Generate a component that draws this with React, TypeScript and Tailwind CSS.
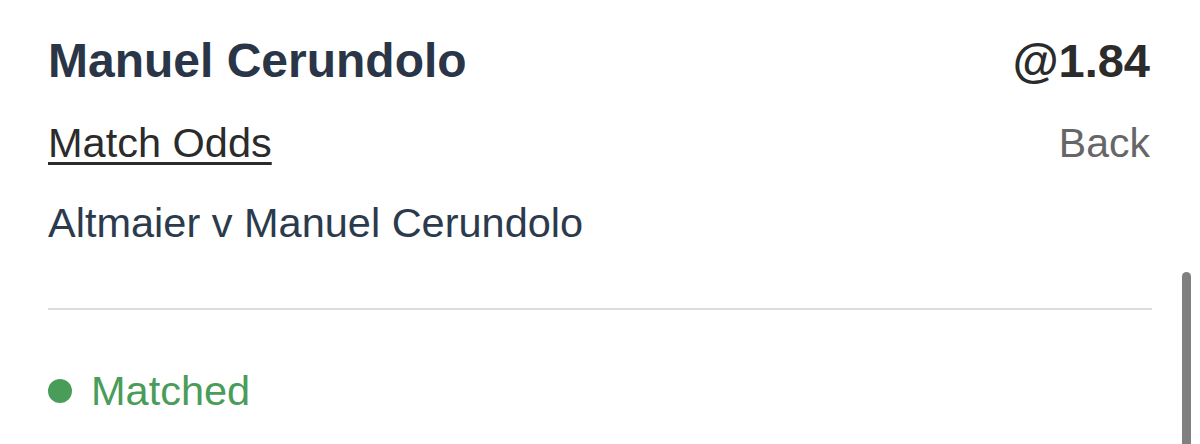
export default function App() {
  return (
    <div className="relative w-[1200px] h-[444px] overflow-hidden bg-white font-['Liberation_Sans',Arial,sans-serif]">
      <div className="pl-12 pr-[50px] pt-[33px]">
        {/* Selection + price */}
        <div className="flex items-center justify-between h-14">
          <span className="text-[48px] leading-[56px] font-bold text-[#2a3647]">Manuel Cerundolo</span>
          <span className="text-[47px] leading-[56px] font-bold text-[#2b2b2b]">@1.84</span>
        </div>

        {/* Market + side */}
        <div className="mt-[30px] flex items-center justify-between h-12">
          <a href="#" className="text-[41.5px] leading-[48px] text-[#2b2b2b] underline decoration-[3px] underline-offset-[5px]">
            Match Odds
          </a>
          <span className="text-[41px] leading-[48px] text-[#666666]">Back</span>
        </div>

        {/* Event */}
        <div className="mt-8 text-[41.5px] leading-[48px] text-[#2c3a4d]">Altmaier v Manuel Cerundolo</div>

        <div className="mt-[61px] -mr-[2px] h-[2px] bg-[#dcdcdc]" />

        {/* Status */}
        <div className="mt-[57px] flex items-center gap-[19px] h-12">
          <span className="w-6 h-6 rounded-full bg-[#4a9c59]" />
          <span className="text-[41.5px] leading-[48px] text-[#4a9c59]">Matched</span>
        </div>
      </div>

      {/* overlay scrollbar */}
      <div className="absolute left-[1182px] top-[272px] w-[9px] h-[200px] rounded-full bg-[#808080]" />
    </div>
  );
}
